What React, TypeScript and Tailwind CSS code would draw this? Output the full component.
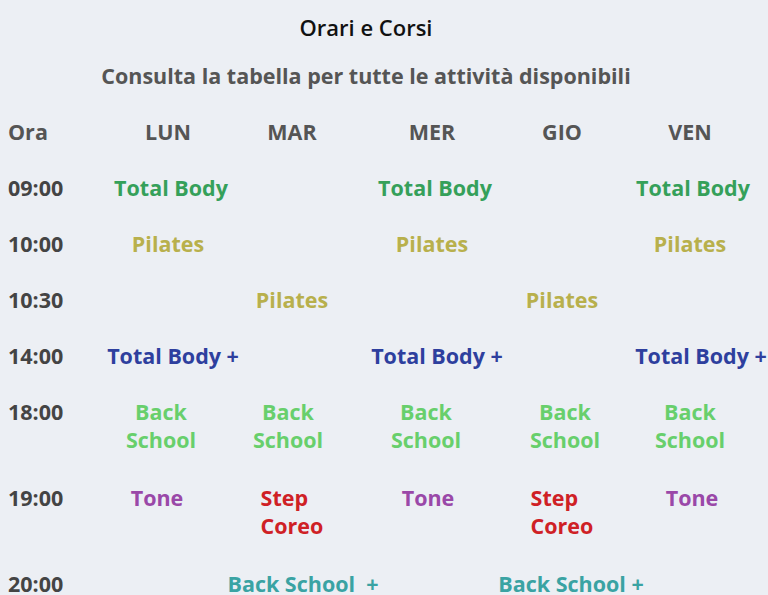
import React from 'react';

type Cell = { lines: string[]; color: string; left?: boolean; shift?: string } | null;

const colors = {
  total: 'text-[#35a05a]',
  pilates: 'text-[#b8b04c]',
  totalPlus: 'text-[#2e3f9e]',
  back: 'text-[#68cf6c]',
  tone: 'text-[#9a48a8]',
  step: 'text-[#cf2025]',
  backPlus: 'text-[#3aa3a3]',
};

const cell = (lines: string[], color: string, shift?: string, left?: boolean): Cell => ({ lines, color, shift, left });

const TB = cell(['Total Body'], colors.total, 'pl-[6px]');
const PI = cell(['Pilates'], colors.pilates);
const BS = ['Back', 'School'];
const SC = cell(['Step', 'Coreo'], colors.step, undefined, true);

const rows: { time: string; cells: Cell[]; tall?: boolean }[] = [
  { time: '09:00', cells: [TB, null, TB, null, TB] },
  { time: '10:00', cells: [PI, null, PI, null, PI] },
  { time: '10:30', cells: [null, PI, null, PI, null] },
  {
    time: '14:00',
    cells: [
      cell(['Total Body +'], colors.totalPlus, 'pl-[10px]'),
      null,
      cell(['Total Body +'], colors.totalPlus, 'pl-[10px]'),
      null,
      cell(['Total Body +'], colors.totalPlus, 'pl-[22px]'),
    ],
  },
  {
    time: '18:00',
    tall: true,
    cells: [
      cell(BS, colors.back, 'pr-[14px]'),
      cell(BS, colors.back, 'pr-[8px]'),
      cell(BS, colors.back, 'pr-[12px]'),
      cell(BS, colors.back, 'pl-[6px]'),
      cell(BS, colors.back),
    ],
  },
  {
    time: '19:00',
    tall: true,
    cells: [
      cell(['Tone'], colors.tone, 'pr-[22px]'),
      SC,
      cell(['Tone'], colors.tone, 'pr-[8px]'),
      SC,
      cell(['Tone'], colors.tone, 'pl-[4px]'),
    ],
  },
  {
    time: '20:00',
    cells: [
      null,
      cell(['Back School\u00a0\u00a0+'], colors.backPlus, 'pl-[22px]'),
      null,
      cell(['Back School +'], colors.backPlus, 'pl-[18px]'),
      null,
    ],
  },
];

const days = ['LUN', 'MAR', 'MER', 'GIO', 'VEN'];

const gridCols = 'grid grid-cols-[96px_128px_120px_160px_100px_156px]';

export default function App() {
  return (
    <div
      className="w-[768px] h-[595px] overflow-hidden bg-[#eceff4] pl-2"
      style={{ fontFamily: '"Open Sans", sans-serif' }}
    >
      <div className="pr-[44px] pt-[13px] text-center">
        <h1 className="text-[22px] leading-[28px] font-semibold text-[#111]">Orari e Corsi</h1>
        <p className="mt-[21px] text-[21.5px] leading-[28px] font-bold text-[#555]">
          Consulta la tabella per tutte le attività disponibili
        </p>
      </div>

      <div className="mt-[14px] text-[21.5px] leading-[28px] font-bold">
        <div className={`${gridCols} py-[14px] text-[#555]`}>
          <div>Ora</div>
          {days.map((d) => (
            <div key={d} className="flex justify-center">{d}</div>
          ))}
        </div>

        {rows.map((r) => (
          <div key={r.time} className={`${gridCols} pt-[14px] ${r.tall ? 'pb-[16px]' : 'pb-[14px]'}`}>
            <div className="text-[#444]">{r.time}</div>
            {r.cells.map((c, i) => (
              <div key={i} className="flex justify-center">
                {c && (
                  <div className={`whitespace-nowrap ${c.color} ${c.left ? 'text-left' : 'text-center'} ${c.shift ?? ''}`}>
                    {c.lines.map((l) => (
                      <div key={l}>{l}</div>
                    ))}
                  </div>
                )}
              </div>
            ))}
          </div>
        ))}
      </div>
    </div>
  );
}
